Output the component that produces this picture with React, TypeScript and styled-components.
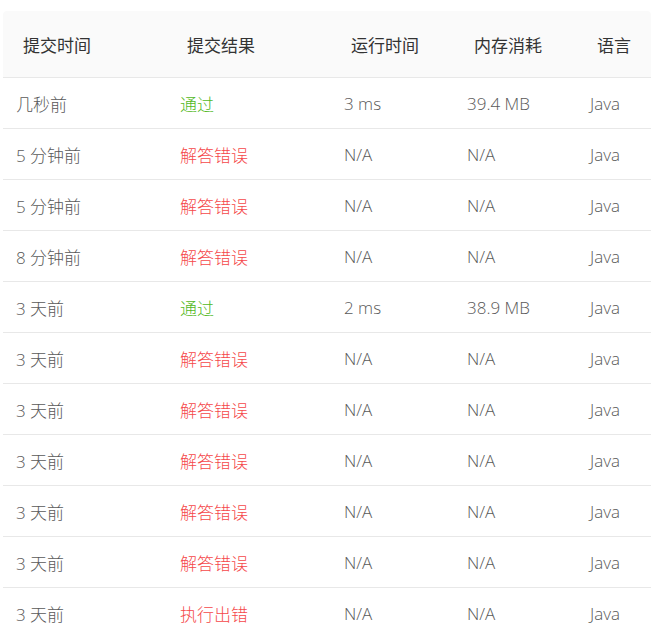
import React from "react";
import styled, { createGlobalStyle } from "styled-components";

const Global = createGlobalStyle`
  html, body { margin: 0; padding: 0; background: #fff; }
  body { font-family: "Open Sans", "Noto Sans CJK SC", sans-serif; }
`;

const Page = styled.div`
  padding: 11px 3px 0 3px;
  width: 648px;
`;

const Table = styled.div`
  display: flex;
  flex-direction: column;
`;

const cols = "164px 164px 123px 123px 1fr";

const HeaderRow = styled.div`
  display: grid;
  grid-template-columns: ${cols};
  height: 66px;
  align-items: center;
  background: #fafafa;
  border-bottom: 1px solid #e8e8e8;
  border-radius: 4px 4px 0 0;
`;

const HeadCell = styled.div`
  padding-left: 20px;
  font-size: 17px;
  color: #333;
  font-weight: 400;
`;

const Row = styled.div`
  display: grid;
  grid-template-columns: ${cols};
  height: 50px;
  align-items: center;
  border-bottom: 1px solid #e8e8e8;
`;

const Cell = styled.div<{ $tone?: "ok" | "err" }>`
  padding-left: 13px;
  font-size: 17px;
  font-weight: 300;
  color: ${(p) => (p.$tone === "ok" ? "#52b81c" : p.$tone === "err" ? "#f5484a" : "#595959")};
`;

type R = { t: string; r: string; ok: boolean; rt: string; mem: string };

const rows: R[] = [
  { t: "几秒前", r: "通过", ok: true, rt: "3 ms", mem: "39.4 MB" },
  { t: "5 分钟前", r: "解答错误", ok: false, rt: "N/A", mem: "N/A" },
  { t: "5 分钟前", r: "解答错误", ok: false, rt: "N/A", mem: "N/A" },
  { t: "8 分钟前", r: "解答错误", ok: false, rt: "N/A", mem: "N/A" },
  { t: "3 天前", r: "通过", ok: true, rt: "2 ms", mem: "38.9 MB" },
  { t: "3 天前", r: "解答错误", ok: false, rt: "N/A", mem: "N/A" },
  { t: "3 天前", r: "解答错误", ok: false, rt: "N/A", mem: "N/A" },
  { t: "3 天前", r: "解答错误", ok: false, rt: "N/A", mem: "N/A" },
  { t: "3 天前", r: "解答错误", ok: false, rt: "N/A", mem: "N/A" },
  { t: "3 天前", r: "解答错误", ok: false, rt: "N/A", mem: "N/A" },
  { t: "3 天前", r: "执行出错", ok: false, rt: "N/A", mem: "N/A" },
];

export default function App() {
  return (
    <>
      <Global />
      <Page>
        <Table>
          <HeaderRow>
            <HeadCell>提交时间</HeadCell>
            <HeadCell>提交结果</HeadCell>
            <HeadCell>运行时间</HeadCell>
            <HeadCell>内存消耗</HeadCell>
            <HeadCell>语言</HeadCell>
          </HeaderRow>
          {rows.map((r, i) => (
            <Row key={i}>
              <Cell>{r.t}</Cell>
              <Cell $tone={r.ok ? "ok" : "err"}>{r.r}</Cell>
              <Cell>{r.rt}</Cell>
              <Cell>{r.mem}</Cell>
              <Cell>Java</Cell>
            </Row>
          ))}
        </Table>
      </Page>
    </>
  );
}
